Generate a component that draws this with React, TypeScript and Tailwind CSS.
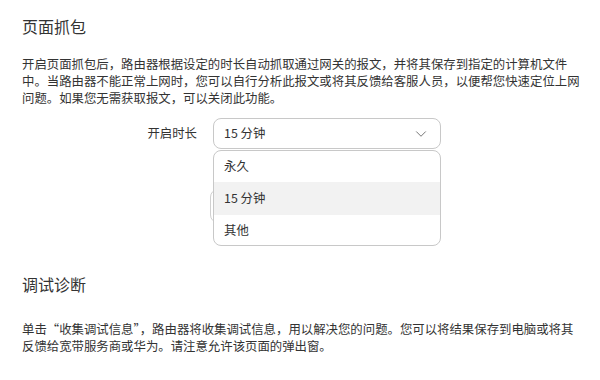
import { ChevronDown } from "lucide-react";

const font = { fontFamily: '"Noto Sans CJK SC", "Noto Sans", sans-serif' };

export default function App() {
  return (
    <div
      className="w-[600px] h-[380px] overflow-hidden bg-white text-[#333] px-[22px]"
      style={font}
    >
      {/* 页面抓包 */}
      <h2 className="text-[16px] leading-[22px] pt-[15px] font-normal">页面抓包</h2>
      <p className="mt-[19px] text-[12.4px] leading-[17px] whitespace-nowrap">
        开启页面抓包后，路由器根据设定的时长自动抓取通过网关的报文，并将其保存到指定的计算机文件
        <br />
        中。当路由器不能正常上网时，您可以自行分析此报文或将其反馈给客服人员，以便帮您快速定位上网
        <br />
        问题。如果您无需获取报文，可以关闭此功能。
      </p>

      <div className="mt-[11px] flex items-start">
        <div className="w-[191px] pr-[16px] text-right text-[12.4px] leading-[31px]">开启时长</div>
        <div className="relative">
          <div className="w-[228px] h-[31px] rounded-[8px] border border-[#c8c8c8] flex items-center justify-between pl-[10px] pr-[10px] text-[12.4px]">
            <span>15 分钟</span>
            <ChevronDown size={18} strokeWidth={1.2} className="text-[#666]" />
          </div>
          {/* button hidden behind the menu */}
          <div className="mt-[40px] -ml-[3px] w-[120px] h-[34px] rounded-[8px] border border-[#d0d0d0]" />
          <div className="absolute left-0 top-[32px] w-[228px] rounded-[8px] border border-[#c8c8c8] bg-white overflow-hidden text-[12.4px]">
            <div className="h-[31px] flex items-center pl-[10px]">永久</div>
            <div className="h-[33px] flex items-center pl-[10px] bg-[#f2f2f2]">15 分钟</div>
            <div className="h-[30px] flex items-center pl-[10px]">其他</div>
          </div>
        </div>
      </div>

      {/* 调试诊断 */}
      <h2 className="mt-[50px] text-[16px] leading-[22px] font-normal">调试诊断</h2>
      <p className="mt-[26px] text-[12.4px] leading-[17px] whitespace-nowrap">
        单击“收集调试信息”，路由器将收集调试信息，用以解决您的问题。您可以将结果保存到电脑或将其
        <br />
        反馈给宽带服务商或华为。请注意允许该页面的弹出窗。
      </p>
    </div>
  );
}
